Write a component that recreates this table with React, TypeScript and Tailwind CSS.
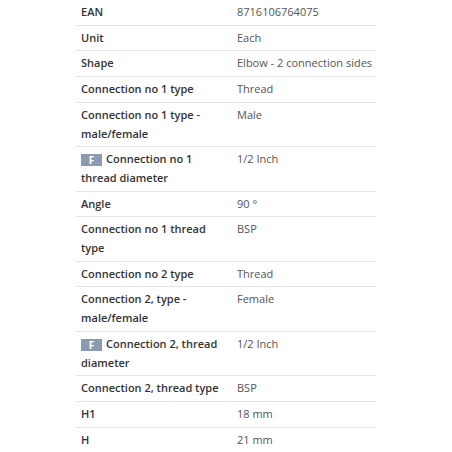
import React from "react";

type Row = { label: string; value: string; badge?: boolean };

const rows: Row[] = [
  { label: "EAN", value: "8716106764075" },
  { label: "Unit", value: "Each" },
  { label: "Shape", value: "Elbow - 2 connection sides" },
  { label: "Connection no 1 type", value: "Thread" },
  { label: "Connection no 1 type - male/female", value: "Male" },
  { label: "Connection no 1 thread diameter", value: "1/2 Inch", badge: true },
  { label: "Angle", value: "90 °" },
  { label: "Connection no 1 thread type", value: "BSP" },
  { label: "Connection no 2 type", value: "Thread" },
  { label: "Connection 2, type - male/female", value: "Female" },
  { label: "Connection 2, thread diameter", value: "1/2 Inch", badge: true },
  { label: "Connection 2, thread type", value: "BSP" },
  { label: "H1", value: "18 mm" },
  { label: "H", value: "21 mm" },
];

export default function App() {
  return (
    <div
      className="w-[452px] h-[452px] overflow-hidden bg-white"
      style={{ fontFamily: '"Open Sans", "Liberation Sans", sans-serif' }}
    >
      <div className="ml-[76px] w-[300px]">
        {rows.map((r, i) => (
          <div
            key={i}
            className="grid grid-cols-[156px_1fr] border-b border-[#e4e4e4] text-[11px] leading-[18.7px]"
          >
            <div className="px-[5px] py-[3px] font-semibold text-[#333333]">
              {r.badge && (
                <span className="inline-block align-top mt-[4px] w-[21px] h-[12px] mr-[4px] bg-[#8a9bb0] text-white text-[10px] leading-[12px] font-bold text-center">
                  F
                </span>
              )}
              {r.label}
            </div>
            <div className="pl-[5px] pr-0 py-[3px] text-[#555555] whitespace-nowrap">{r.value}</div>
          </div>
        ))}
      </div>
    </div>
  );
}
